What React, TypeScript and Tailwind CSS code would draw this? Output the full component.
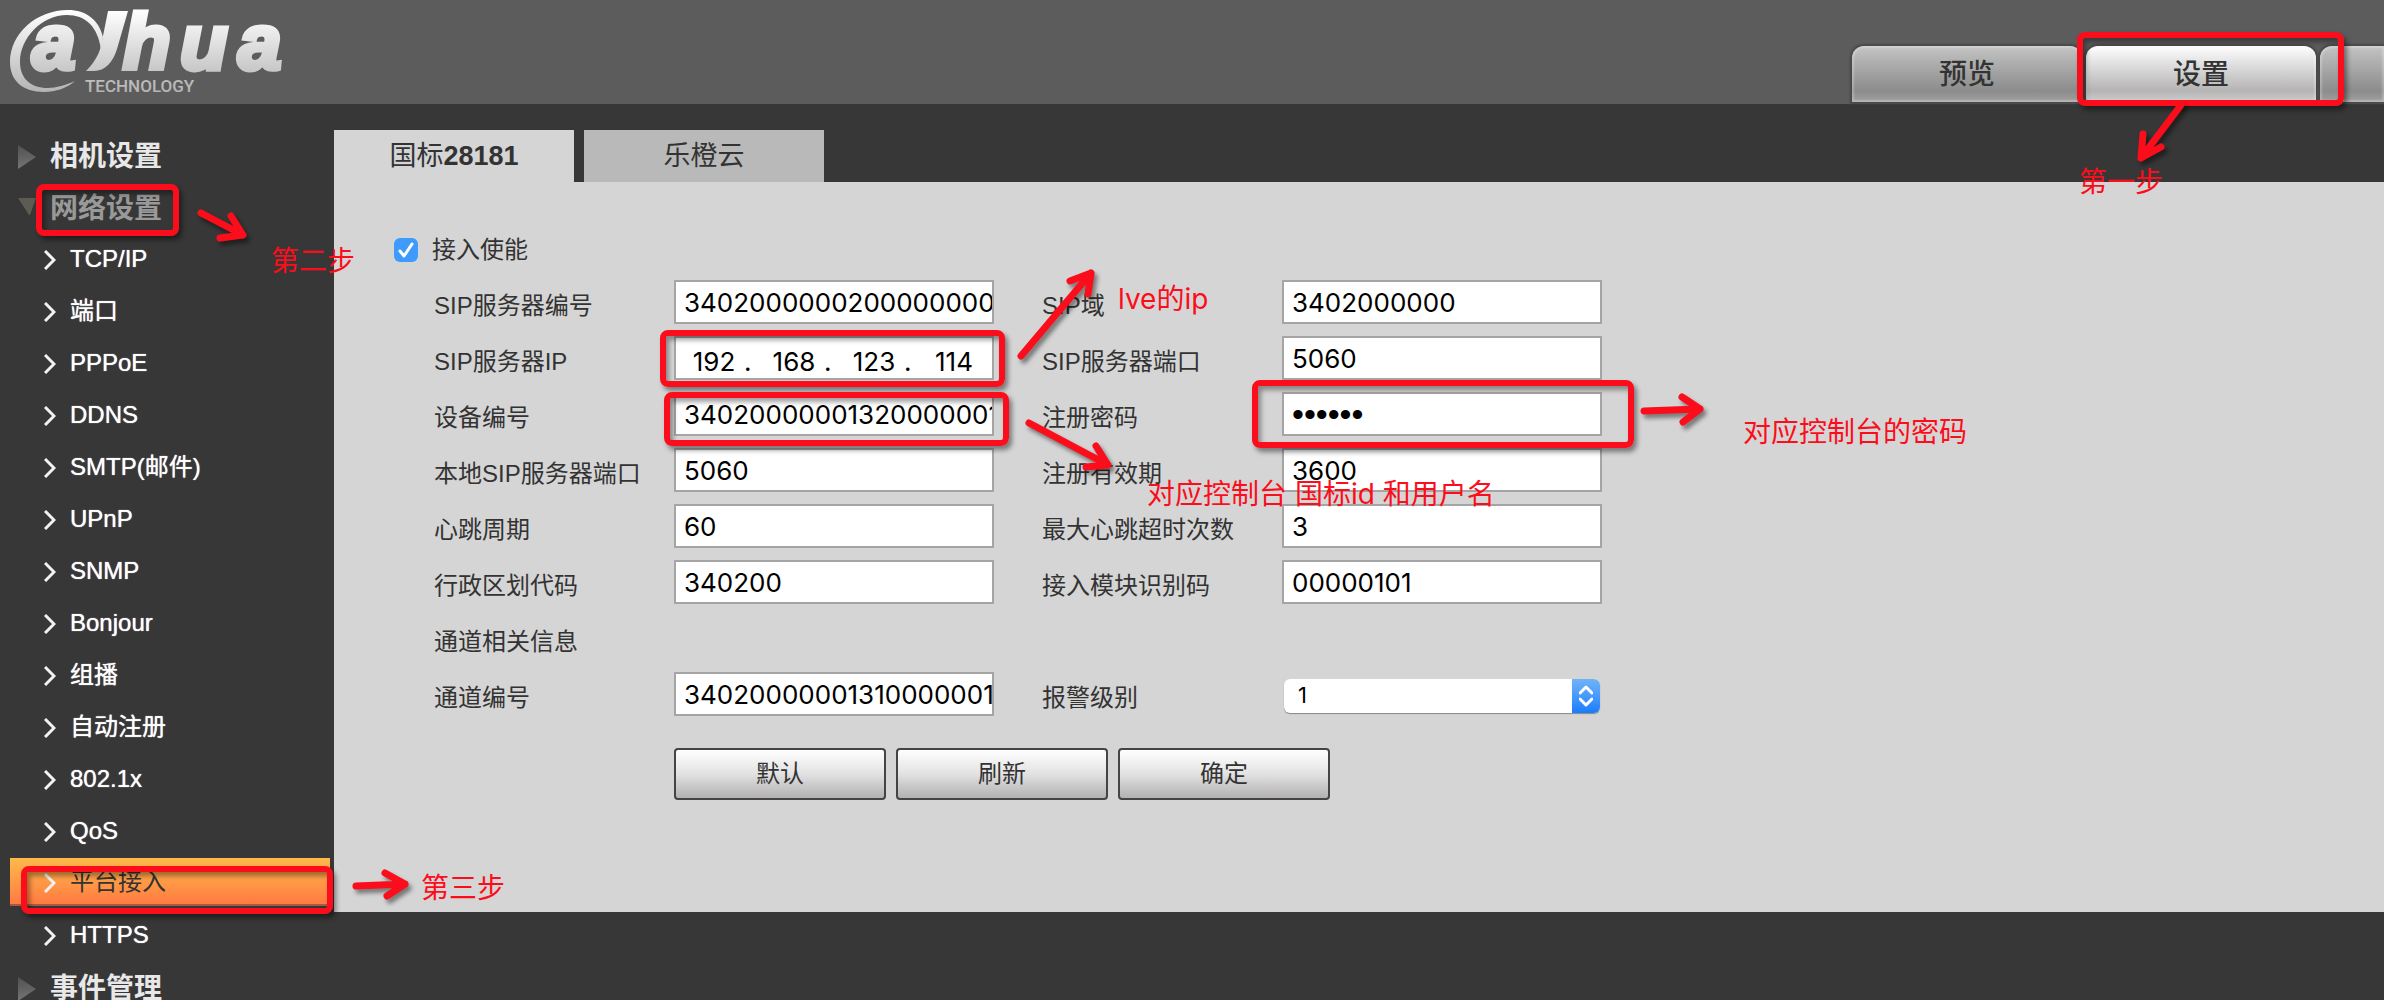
import { useState } from 'react'
import type { ReactNode } from 'react'
import clsx from 'clsx'

interface FieldData {
    id: string
    label: string
    value: string
    type?: 'text' | 'password' | 'ip' | 'select'
}

const fields: FieldData[] = [
    { id: 'sipServerId', label: 'SIP服务器编号', value: '34020000002000000001' },
    { id: 'sipDomain', label: 'SIP域', value: '3402000000' },
    { id: 'sipServerIp', label: 'SIP服务器IP', value: '192.168.123.114', type: 'ip' },
    { id: 'sipServerPort', label: 'SIP服务器端口', value: '5060' },
    { id: 'deviceId', label: '设备编号', value: '34020000001320000001' },
    { id: 'password', label: '注册密码', value: '123456', type: 'password' },
    { id: 'localPort', label: '本地SIP服务器端口', value: '5060' },
    { id: 'expires', label: '注册有效期', value: '3600' },
    { id: 'heartbeat', label: '心跳周期', value: '60' },
    { id: 'maxTimeout', label: '最大心跳超时次数', value: '3' },
    { id: 'areaCode', label: '行政区划代码', value: '340200' },
    { id: 'moduleCode', label: '接入模块识别码', value: '00000101' },
]

const channelFields: FieldData[] = [
    { id: 'channelId', label: '通道编号', value: '34020000001310000001' },
    { id: 'alarmLevel', label: '报警级别', value: '1', type: 'select' },
]

const menuItems = [
    'TCP/IP', '端口', 'PPPoE', 'DDNS', 'SMTP(邮件)', 'UPnP', 'SNMP', 'Bonjour',
    '组播', '自动注册', '802.1x', 'QoS', '平台接入', 'HTTPS',
]

const inputClass = 'border-2 border-[#a5a5a5] bg-white text-black outline-none'

const App = () => {
    const [active, setActive] = useState('平台接入')

    return (
        <div className="relative flex h-screen flex-col overflow-hidden bg-[#373737] font-['Liberation_Sans','Noto_Sans_CJK_SC',sans-serif] text-2xl text-[#333]">
            <header className="flex h-[104px] shrink-0 justify-between bg-[#5c5c5c]">
                <Logo />
                <nav className="relative flex items-end gap-1 pb-0.5">
                    <TopTab className="w-[230px] rounded-t-xl from-[#c4c4c4] via-[#8c8c8c] to-[#a0a0a0]">预览</TopTab>
                    <TopTab className="w-[230px] rounded-t-xl from-white via-[#b5b3b4] to-[#cfcfcf]">设置</TopTab>
                    <TopTab className="w-16 rounded-tl-xl from-[#c4c4c4] via-[#8c8c8c] to-[#a0a0a0]" />
                    <MarkBox className="top-8 right-10 h-[74px] w-[267px]" />
                    <MarkArrow className="top-[98px] right-[196px]" width={60} height={70} d="M53 7 L13 60 M15 36 L13 60 L33 49" />
                    <MarkText className="top-[160px] right-[221px]">第一步</MarkText>
                </nav>
            </header>

            <div className="flex items-start pt-[26px]">
                <aside className="w-[334px] shrink-0">
                    <MenuGroup>相机设置</MenuGroup>
                    <MenuGroup open>网络设置</MenuGroup>
                    <ul>
                        {menuItems.map((item) => (
                            <li key={item} className="h-[52px] pr-1 pl-2.5">
                                <a
                                    href="#"
                                    className={clsx(
                                        'flex h-12 w-full items-center gap-3.5 pt-0.5 pl-[34px] leading-8',
                                        item === active
                                            ? 'border-b-2 border-[#a85a3c] bg-linear-to-b from-[#fdb94a] to-[#ff7a42] text-[#333]'
                                            : 'text-white text-shadow-[0_0_1px_#fff]',
                                    )}
                                    onClick={() => setActive(item)}
                                >
                                    <ChevronIcon className="mt-0.5 h-5 w-3 text-[#f2f2f2]" />
                                    <span>{item}</span>
                                </a>
                            </li>
                        ))}
                    </ul>
                    <MenuGroup>事件管理</MenuGroup>
                </aside>

                <main className="min-w-0 grow">
                    <div className="flex gap-2.5 text-[27px]">
                        <button type="button" className="h-[52px] w-60 bg-[#d5d5d5] pt-0.5">
                            国标<b>28181</b>
                        </button>
                        <button type="button" className="h-[52px] w-60 bg-[#b9b9b9] pt-0.5">乐橙云</button>
                    </div>
                    <form className="bg-[#d5d5d5] pt-14 pb-28 pl-[60px]" onSubmit={(e) => e.preventDefault()}>
                        <label className="flex h-6 items-center gap-3.5">
                            <span className="relative flex">
                                <input type="checkbox" defaultChecked className="peer size-6 appearance-none rounded-md bg-white checked:bg-[#3f9bfb]" />
                                <CheckIcon className="pointer-events-none absolute inset-0 hidden size-6 text-white peer-checked:block" />
                            </span>
                            接入使能
                        </label>
                        <div className="mt-[18px] ml-10 grid grid-cols-[560px_560px] gap-x-12 gap-y-3">
                            {fields.map((field) => <Field key={field.id} {...field} />)}
                            <h2 className="col-span-2 h-11 pt-1 leading-11">通道相关信息</h2>
                            {channelFields.map((field) => <Field key={field.id} {...field} />)}
                        </div>
                        <div className="mt-8 ml-[280px] flex gap-2.5">
                            {['默认', '刷新', '确定'].map((name) => (
                                <button
                                    key={name}
                                    type="button"
                                    className="h-[52px] w-[212px] rounded border-2 border-[#444] bg-linear-to-b from-white via-[#e2e2e2] to-[#b3b1b2]"
                                >
                                    {name}
                                </button>
                            ))}
                        </div>
                    </form>
                </main>
            </div>

            {/* 步骤标注 */}
            <MarkBox className="top-[184px] left-9 h-[52px] w-[143px]" />
            <MarkArrow className="top-[203px] left-[191px]" width={70} height={50} d="M10 10 L52 32 M40 13 L52 32 L29 35" />
            <MarkText className="top-[239px] left-[271px]">第二步</MarkText>

            <MarkBox className="top-[866px] left-[21px] h-12 w-[312px]" />
            <MarkArrow className="top-[863px] left-[346px]" width={80} height={50} d="M10 23 L59 21 M39 10 L59 21 L41 33" />
            <MarkText className="top-[866px] left-[421px]">第三步</MarkText>

            <MarkBox className="top-[330px] left-[660px] h-[57px] w-[345px]" />
            <MarkArrow className="top-[260px] left-[1010px]" width={100} height={110} d="M11 96 L81 13 M60 21 L81 13 L78 34" />
            <MarkText className="top-[277px] left-[1118px]">lve的ip</MarkText>

            <MarkBox className="top-[392px] left-[664px] h-[54px] w-[345px]" />
            <MarkArrow className="top-[413px] left-[1019px]" width={110} height={80} d="M10 10 L89 52 M77 33 L89 52 L67 54" />
            <MarkText className="top-[472px] left-[1147px]">对应控制台 国标id 和用户名</MarkText>

            <MarkBox className="top-[380px] left-[1252px] h-[68px] w-[382px]" />
            <MarkArrow className="top-[387px] left-[1633px]" width={90} height={50} d="M11 24 L67 22 M49 10 L67 22 L50 35" />
            <MarkText className="top-[410px] left-[1743px]">对应控制台的密码</MarkText>
        </div>
    )
}

function TopTab({ className, children }: { className: string; children?: ReactNode }) {
    return (
        <button
            type="button"
            className={clsx('h-14 bg-linear-to-b via-80% pt-0.5 text-[28px] font-medium shadow-[0_0_2px_2px_#484848] inset-shadow-[0_0_2px_2px_#ffffff40]', className)}
        >
            {children}
        </button>
    )
}

function MenuGroup({ open = false, children }: { open?: boolean; children: ReactNode }) {
    return (
        <button
            type="button"
            aria-expanded={open}
            className={clsx('flex h-[52px] w-full items-center gap-3.5 pt-0.5 pl-[18px] text-[28px] font-bold', open ? 'text-[#999]' : 'text-[#e8e8e8]')}
        >
            <svg className="h-6 w-[18px]" viewBox="0 0 18 24" aria-hidden>
                <defs>
                    <linearGradient id="tri" x1="0" y1="0" x2="0" y2="1">
                        <stop offset="0" stopColor="#505050" />
                        <stop offset="1" stopColor="#757575" />
                    </linearGradient>
                </defs>
                {open ? <path d="M0 1h18l-6 17H11Z" fill="#5e5b52" /> : <path d="M0 0 18 12 0 24Z" fill="url(#tri)" />}
            </svg>
            {children}
        </button>
    )
}

function Field({ id, label, value, type = 'text' }: FieldData) {
    return (
        <div className="flex h-11">
            <label htmlFor={id} className="w-60 pt-1 leading-11">{label}</label>
            {type === 'ip' ? (
                <div className={clsx('flex w-80 pt-2 pl-2 font-[Inter] text-[26px]', inputClass)}>
                    {value.split('.').map((part, i) => (
                        <span key={i} className="flex h-8 items-center">
                            <input id={i === 0 ? id : undefined} aria-label={label} defaultValue={part} className="w-[60px] text-center outline-none" />
                            {i < 3 ? <span className="w-5">.</span> : null}
                        </span>
                    ))}
                </div>
            ) : type === 'select' ? (
                <div className="relative mt-[7px] ml-0.5 h-[34px] w-[316px]">
                    <select
                        id={id}
                        defaultValue={value}
                        className="h-full w-full appearance-none rounded-md bg-white pl-3.5 font-[Inter] text-[22px] text-black shadow-[0_1px_1px_#888]"
                    >
                        <option>1</option>
                        <option>2</option>
                        <option>3</option>
                    </select>
                    <span className="pointer-events-none absolute inset-y-0 right-0 flex w-7 items-center justify-center rounded-r-md bg-linear-to-b from-[#6fb4f8] to-[#167cfc]">
                        <UpDownIcon className="h-[22px] w-3.5 text-white" />
                    </span>
                </div>
            ) : (
                <input
                    id={id}
                    type={type}
                    defaultValue={value}
                    className={clsx(
                        'w-80 pl-2',
                        type === 'password' ? "pt-0.5 font-['Liberation_Sans'] text-[34px]" : 'pt-0.5 font-[Inter] text-[26px]',
                        inputClass,
                    )}
                />
            )}
        </div>
    )
}

function MarkBox({ className }: { className: string }) {
    return (
        <div
            className={clsx(
                'pointer-events-none absolute rounded-lg border-6 border-[#fc0d1b] shadow-[3px_4px_5px_#00000070] inset-shadow-[3px_4px_5px_#00000060]',
                className,
            )}
        />
    )
}

function MarkText({ className, children }: { className: string; children: ReactNode }) {
    return (
        <p
            className={clsx(
                "pointer-events-none absolute font-[Inter,'Noto_Sans_CJK_SC',sans-serif] text-[28px] leading-11 whitespace-nowrap text-[#fc0d1b]",
                className,
            )}
        >
            {children}
        </p>
    )
}

function MarkArrow({ className, width, height, d }: { className: string; width: number; height: number; d: string }) {
    return (
        <svg
            className={clsx('pointer-events-none absolute drop-shadow-[3px_4px_2px_#00000070]', className)}
            width={width}
            height={height}
            fill="none"
            aria-hidden
        >
            <path d={d} stroke="#fc0d1b" strokeWidth="7" strokeLinecap="round" strokeLinejoin="round" />
        </svg>
    )
}

function Logo() {
    return (
        <svg className="h-[104px] w-[300px]" viewBox="0 0 300 104" role="img" aria-label="alhua technology">
            <defs>
                <linearGradient id="logo" gradientUnits="userSpaceOnUse" x1="0" y1="10" x2="0" y2="92">
                    <stop offset="0" stopColor="#fff" />
                    <stop offset="1" stopColor="#b4b4b4" />
                </linearGradient>
            </defs>
            <g fill="url(#logo)">
                {/* 环形飘带 */}
                <path d="M103 37C99 20 86 10 68 10C36 10 10 34 10 62C10 81 23 92 44 92C56 92 67 88 75 81C66 85 56 88 48 88C30 88 20 78 20 62C20 38 42 15 67 15C85 15 98 26 101 50Z" />
                <path d="M108 11H128L117 49C113 62 105 71 94 71H86C93 64 99 55 101 46Z" />
                <g className="font-['Liberation_Sans'] text-[78px] font-bold italic" stroke="url(#logo)" strokeWidth="5">
                    <text x="32" y="69">a</text>
                    <text x="123" y="69">h</text>
                    <text x="180" y="69">u</text>
                    <text x="238" y="69">a</text>
                </g>
                <text x="85" y="92" className="font-[Roboto] text-[17px] font-medium">TECHNOLOGY</text>
            </g>
        </svg>
    )
}

function ChevronIcon({ className }: { className?: string }) {
    return (
        <svg className={className} viewBox="0 0 12 20" fill="none" aria-hidden>
            <path d="M1 1 10 10 1 19" stroke="currentColor" strokeWidth="3" />
        </svg>
    )
}

function CheckIcon({ className }: { className?: string }) {
    return (
        <svg className={className} viewBox="0 0 24 24" fill="none" aria-hidden>
            <path d="m6 13 4 5 8-12" stroke="currentColor" strokeWidth="3" strokeLinecap="round" strokeLinejoin="round" />
        </svg>
    )
}

function UpDownIcon({ className }: { className?: string }) {
    return (
        <svg className={className} viewBox="0 0 14 22" fill="none" aria-hidden>
            <path d="m1 8 6-6 6 6M1 14l6 6 6-6" stroke="currentColor" strokeWidth="3" strokeLinecap="round" strokeLinejoin="round" />
        </svg>
    )
}

export default App
